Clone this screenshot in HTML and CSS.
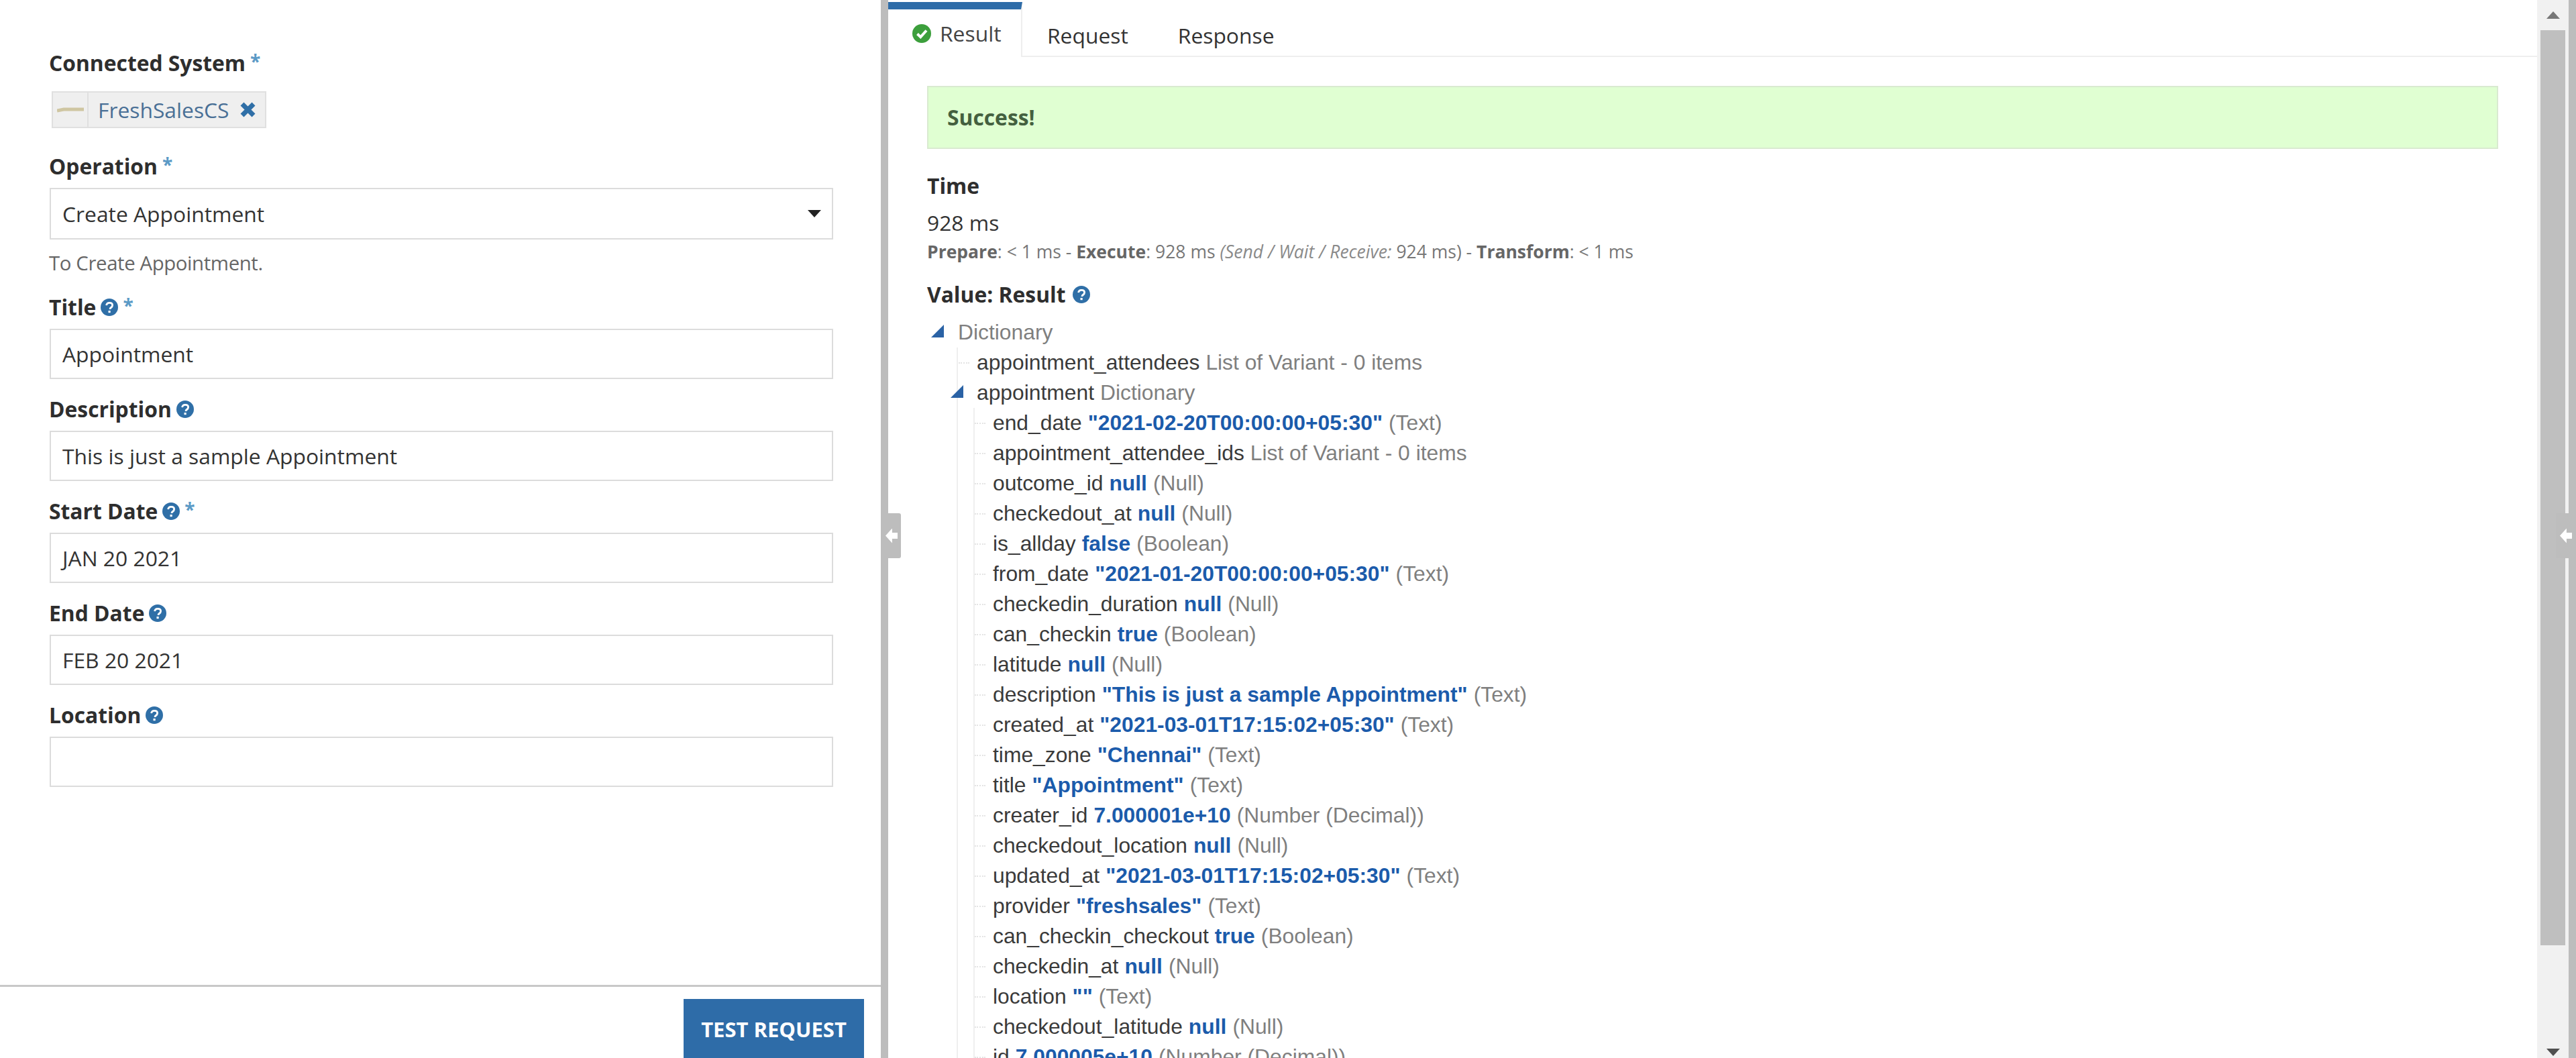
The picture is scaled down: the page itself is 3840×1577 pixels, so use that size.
FILE: index.html
```html
<!DOCTYPE html>
<html lang="en">
<head>
<meta charset="utf-8">
<title>Integration test</title>
<link rel="stylesheet" href="styles.css">
</head>
<body>
<svg class="defs" width="0" height="0" aria-hidden="true">
  <symbol id="help" viewBox="0 0 26 26">
    <circle cx="13" cy="13" r="13" fill="#2f6fa7"/>
    <path d="M8.6 10.2c.3-2.5 2.1-3.9 4.6-3.9 2.6 0 4.4 1.5 4.4 3.7 0 1.7-.9 2.6-2.2 3.5-1 .7-1.4 1.2-1.4 2.4" fill="none" stroke="#fff" stroke-width="2.8"/>
    <rect x="11.5" y="18" width="3.2" height="3.2" fill="#fff"/>
  </symbol>
  <symbol id="tri" viewBox="0 0 19 19">
    <polygon points="19,0 19,19 0,19" fill="#2a62a5"/>
  </symbol>
</svg>
<div class="app">
  <section class="left">
    <div class="form">
      <div class="field field-first">
        <div class="label">Connected System <span class="req">*</span></div>
        <div class="tag">
          <span class="tag-logo"><svg width="40" height="8" viewBox="0 0 40 8"><path d="M0 5 L10 3 H40" stroke="#cfc6a2" stroke-width="5" fill="none"/></svg></span>
          <span class="tag-name">FreshSalesCS</span>
          <svg class="tag-x" width="25" height="25" viewBox="0 0 25 25"><path d="M4 4 L21 21 M21 4 L4 21" stroke="#2f6fa7" stroke-width="7"/></svg>
        </div>
      </div>
      <div class="field field-op">
        <div class="label">Operation <span class="req">*</span></div>
        <div class="input select">Create Appointment<span class="caret"></span></div>
      </div>
      <div class="hint">To Create Appointment.</div>
      <div class="field">
        <div class="label">Title <svg class="help" width="26" height="26"><use href="#help"/></svg> <span class="req">*</span></div>
        <div class="input">Appointment</div>
      </div>
      <div class="field">
        <div class="label">Description <svg class="help" width="26" height="26"><use href="#help"/></svg></div>
        <div class="input">This is just a sample Appointment</div>
      </div>
      <div class="field">
        <div class="label">Start Date <svg class="help" width="26" height="26"><use href="#help"/></svg> <span class="req">*</span></div>
        <div class="input">JAN 20 2021</div>
      </div>
      <div class="field">
        <div class="label">End Date <svg class="help" width="26" height="26"><use href="#help"/></svg></div>
        <div class="input">FEB 20 2021</div>
      </div>
      <div class="field">
        <div class="label">Location <svg class="help" width="26" height="26"><use href="#help"/></svg></div>
        <div class="input"></div>
      </div>
    </div>
    <div class="footer"><div class="btn">TEST REQUEST</div></div>
  </section>

  <div class="divider">
    <div class="handle handle-left"><span class="arrow"></span></div>
  </div>

  <section class="right">
    <nav class="tabs">
      <div class="tab tab-active">
        <svg class="check" width="28" height="28" viewBox="0 0 28 28"><circle cx="14" cy="14" r="14" fill="#3c9f3c"/><path d="M7.5 14.5 L12.3 19.2 L21 9.5" fill="none" stroke="#fff" stroke-width="4"/></svg>
        Result
      </div>
      <div class="tab">Request</div>
      <div class="tab">Response</div>
    </nav>
    <div class="content">
      <div class="success">Success!</div>
      <div class="heading heading-time">Time</div>
      <div class="time">928 ms</div>
      <div class="breakdown"><b>Prepare</b>: &lt; 1 ms - <b>Execute</b>: 928 ms <i>(Send / Wait / Receive:</i> 924 ms) - <b>Transform</b>: &lt; 1 ms</div>
      <div class="heading heading-value">Value: Result <svg class="help" width="26" height="26"><use href="#help"/></svg></div>
      <div class="tree">
        <div class="row row-root"><svg class="tri" width="19" height="19"><use href="#tri"/></svg><span class="t">Dictionary</span></div>
        <div class="kids kids-1">
          <div class="row"><span class="k">appointment_attendees</span> <span class="t">List of Variant - 0 items</span></div>
          <div class="row"><svg class="tri" width="19" height="19"><use href="#tri"/></svg><span class="k">appointment</span> <span class="t">Dictionary</span></div>
          <div class="kids kids-2">
            <div class="row"><span class="k">end_date</span> <span class="v">"2021-02-20T00:00:00+05:30"</span> <span class="t">(Text)</span></div>
            <div class="row"><span class="k">appointment_attendee_ids</span> <span class="t">List of Variant - 0 items</span></div>
            <div class="row"><span class="k">outcome_id</span> <span class="v">null</span> <span class="t">(Null)</span></div>
            <div class="row"><span class="k">checkedout_at</span> <span class="v">null</span> <span class="t">(Null)</span></div>
            <div class="row"><span class="k">is_allday</span> <span class="v">false</span> <span class="t">(Boolean)</span></div>
            <div class="row"><span class="k">from_date</span> <span class="v">"2021-01-20T00:00:00+05:30"</span> <span class="t">(Text)</span></div>
            <div class="row"><span class="k">checkedin_duration</span> <span class="v">null</span> <span class="t">(Null)</span></div>
            <div class="row"><span class="k">can_checkin</span> <span class="v">true</span> <span class="t">(Boolean)</span></div>
            <div class="row"><span class="k">latitude</span> <span class="v">null</span> <span class="t">(Null)</span></div>
            <div class="row"><span class="k">description</span> <span class="v">"This is just a sample Appointment"</span> <span class="t">(Text)</span></div>
            <div class="row"><span class="k">created_at</span> <span class="v">"2021-03-01T17:15:02+05:30"</span> <span class="t">(Text)</span></div>
            <div class="row"><span class="k">time_zone</span> <span class="v">"Chennai"</span> <span class="t">(Text)</span></div>
            <div class="row"><span class="k">title</span> <span class="v">"Appointment"</span> <span class="t">(Text)</span></div>
            <div class="row"><span class="k">creater_id</span> <span class="v">7.000001e+10</span> <span class="t">(Number (Decimal))</span></div>
            <div class="row"><span class="k">checkedout_location</span> <span class="v">null</span> <span class="t">(Null)</span></div>
            <div class="row"><span class="k">updated_at</span> <span class="v">"2021-03-01T17:15:02+05:30"</span> <span class="t">(Text)</span></div>
            <div class="row"><span class="k">provider</span> <span class="v">"freshsales"</span> <span class="t">(Text)</span></div>
            <div class="row"><span class="k">can_checkin_checkout</span> <span class="v">true</span> <span class="t">(Boolean)</span></div>
            <div class="row"><span class="k">checkedin_at</span> <span class="v">null</span> <span class="t">(Null)</span></div>
            <div class="row"><span class="k">location</span> <span class="v">""</span> <span class="t">(Text)</span></div>
            <div class="row"><span class="k">checkedout_latitude</span> <span class="v">null</span> <span class="t">(Null)</span></div>
            <div class="row"><span class="k">id</span> <span class="v">7.000005e+10</span> <span class="t">(Number (Decimal))</span></div>
          </div>
        </div>
      </div>
    </div>
  </section>

  <div class="scrollbar">
    <div class="sb-btn"><span class="sb-up"></span></div>
    <div class="sb-thumb"></div>
    <div class="sb-rest"></div>
    <div class="sb-btn sb-btn-down"><span class="sb-down"></span></div>
  </div>

  <div class="divider divider-right">
    <div class="handle handle-right"><span class="arrow"></span></div>
  </div>
</div>
</body>
</html>
```

FILE: styles.css
```css
* { box-sizing: border-box; }
html, body { margin: 0; height: 100%; overflow: hidden; background: #fff; }
body { font-family: "Open Sans", sans-serif; color: #333; }
.defs { position: absolute; }
.app { display: flex; height: 100vh; overflow: hidden; }

.left { width: 1313px; flex: none; display: flex; flex-direction: column; height: 100%; }
.form { flex: 1; padding: 74px 0 0 73px; min-height: 0; }
.field { margin-bottom: 25px; }
.field-first { margin-bottom: 37px; }
.field-op { margin-bottom: 0; }
.label { height: 40px; line-height: 40px; margin-bottom: 12px; font-size: 31.8px; font-weight: 700; color: #2e2e2e; display: flex; align-items: center; gap: 7px; }
.field-first .label { margin-bottom: 22px; }
.req { color: #5b9ac6; font-weight: 700; font-size: 28px; margin-top: -6px; }
.help { flex: none; }

.tag { display: flex; align-items: center; width: 320px; height: 55px; margin-left: 4px; background: #efefef; border: 2px solid #e0e0e0; font-size: 31.8px; color: #4a7096; }
.tag-logo { width: 53px; height: 100%; flex: none; display: flex; align-items: center; justify-content: center; border-right: 2px solid #e0e0e0; }
.tag-name { margin-left: 14px; }
.tag-x { margin-left: 15px; flex: none; }

.input { width: 1168px; height: 75px; margin-left: 1px; padding-left: 17px; line-height: 71px; border: 2px solid #dcdcdc; font-size: 31.8px; color: #333; background: #fff; }
.select { height: 77px; line-height: 73px; position: relative; }
.caret { position: absolute; right: 16px; top: 31px; border-left: 10px solid transparent; border-right: 10px solid transparent; border-top: 11px solid #222; }
.hint { height: 34px; line-height: 34px; margin: 18px 0 29px; font-size: 29.4px; letter-spacing: -0.4px; color: #666; }

.footer { height: 109px; flex: none; border-top: 3px solid #c8c8c8; padding: 18px 25px 0 0; display: flex; justify-content: flex-end; overflow: hidden; }
.btn { width: 269px; height: 90px; flex: none; background: #2e6ca8; color: #fff; font-size: 31px; font-weight: 700; text-align: center; line-height: 90px; }

.divider { width: 11px; flex: none; background: #bdbdbd; position: relative; }
.handle { position: absolute; top: 765px; height: 67px; background: #bdbdbd; display: flex; align-items: center; }
.handle-left { left: 0; width: 30px; border-radius: 0 3px 3px 0; justify-content: flex-end; padding-right: 5px; }
.handle-right { right: 0; width: 30px; justify-content: center; }
.arrow { width: 18px; height: 22px; background: #fff; clip-path: polygon(0 50%, 55% 0, 55% 30%, 100% 30%, 100% 70%, 55% 70%, 55% 100%); }

.right { flex: 1; min-width: 0; height: 100%; overflow: hidden; display: flex; flex-direction: column; }
.tabs { flex: none; height: 85px; display: flex; border-bottom: 2px solid #eee; font-size: 31.8px; color: #333; }
.tab { display: flex; align-items: center; height: 85px; padding: 20px 37px 0; gap: 13px; }
.tab-active { width: 200px; margin-top: 3px; height: 82px; padding: 0 0 0 36px; border-top: 11px solid #2e6ca8; border-right: 2px solid #eee; background: #fff; color: #444; }
.check { flex: none; }

.content { padding: 43px 58px 0; }
.success { height: 94px; line-height: 90px; padding-left: 28px; background: #e0ffd2; border: 2px solid #d9ead0; font-size: 31.8px; font-weight: 700; color: #44603f; }
.heading { height: 40px; line-height: 40px; font-size: 31.8px; font-weight: 700; color: #2e2e2e; display: flex; align-items: center; gap: 10px; }
.heading-time { margin-top: 35px; }
.time { height: 40px; line-height: 40px; margin-top: 15px; font-size: 31.8px; color: #333; }
.breakdown { height: 30px; line-height: 30px; margin-top: 8px; font-size: 26.5px; color: #777; white-space: nowrap; }
.breakdown b { font-weight: 700; color: #666; }
.breakdown i { color: #8a8a8a; }
.heading-value { margin-top: 29px; }

.tree { margin: 14px 0 0 6px; font-family: "Liberation Sans", Arial, sans-serif; font-size: 31.8px; }
.row { height: 45px; display: flex; align-items: center; gap: 9px; position: relative; white-space: nowrap; }
.row-root { padding-left: 40px; }
.tri { position: absolute; left: -39px; top: 11px; }
.row-root .tri { left: 0; }
.k { color: #3a3a3a; }
.v { color: #1b5bab; font-weight: 700; }
.t { color: #7f7f7f; }
.kids { position: relative; border-left: 2px solid #efefef; }
.kids-1 { margin-left: 38px; padding-left: 28px; }
.kids-2 { margin-left: -5px; padding-left: 27px; }
.kids-1 > .row::before, .kids-2 > .row::before { content: ""; position: absolute; left: -27px; top: 22px; width: 16px; border-top: 2px dotted #e4e4e4; }
.kids-1 > .row:has(.tri)::before { display: none; }

.scrollbar { width: 47px; flex: none; height: 100%; display: flex; flex-direction: column; background: #f1f1f1; }
.sb-btn { height: 45px; flex: none; display: flex; align-items: center; justify-content: center; }
.sb-btn-down { height: 24px; align-items: flex-start; padding-top: 10px; }
.sb-thumb { height: 1364px; flex: none; margin: 0 5px; width: 37px; background: #bfbfbf; }
.sb-rest { flex: 1; }
.sb-up { border-left: 10px solid transparent; border-right: 10px solid transparent; border-bottom: 11px solid #777; }
.sb-down { border-left: 10px solid transparent; border-right: 10px solid transparent; border-top: 11px solid #505050; }
```
